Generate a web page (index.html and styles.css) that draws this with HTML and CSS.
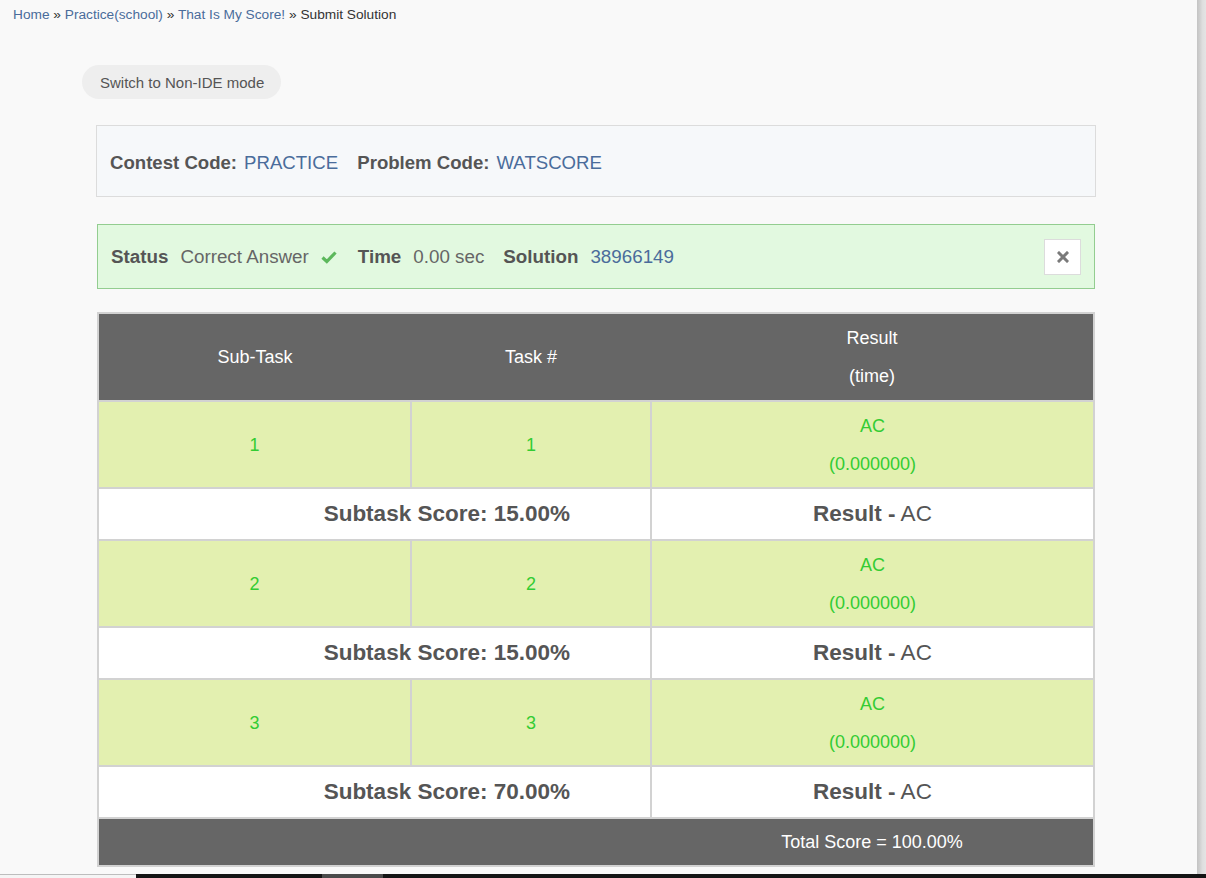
FILE: index.html
```html
<!DOCTYPE html>
<html>
<head>
<meta charset="utf-8">
<link rel="stylesheet" href="styles.css">
</head>
<body>
<div class="screen">
  <div class="page">
    <div class="breadcrumb">
      <a href="#">Home</a> <span class="sep">»</span> <a href="#">Practice(school)</a> <span class="sep">»</span> <a href="#">That Is My Score!</a> <span class="sep">»</span> <span class="current">Submit Solution</span>
    </div>
    <div class="toolbar">
      <button class="mode-btn">Switch to Non-IDE mode</button>
    </div>
    <div class="content">
      <div class="codes">
        <span class="label">Contest Code:</span><a class="value link" href="#">PRACTICE</a>
        <span class="label second">Problem Code:</span><a class="value link" href="#">WATSCORE</a>
      </div>
      <div class="status">
        <div class="status-items">
          <span class="label">Status</span><span class="value">Correct Answer</span>
          <svg class="check" width="16" height="14" viewBox="0 0 16 14"><path d="M1.5 7.5 L5.8 11.5 L14.5 2.5" fill="none" stroke="#5cb85c" stroke-width="3.2" stroke-linejoin="miter"/></svg>
          <span class="label">Time</span><span class="value">0.00 sec</span>
          <span class="label">Solution</span><a class="value link" href="#">38966149</a>
        </div>
        <button class="close"><svg width="12" height="12" viewBox="0 0 12 12"><path d="M2 2 L10 10 M10 2 L2 10" stroke="#7a7a7a" stroke-width="3" stroke-linecap="square"/></svg></button>
      </div>
      <table class="results">
        <colgroup><col class="c1"><col class="c2"><col class="c3"></colgroup>
        <thead>
          <tr><th class="h1">Sub-Task</th><th class="h2">Task #</th><th class="h3">Result<br>(time)</th></tr>
        </thead>
        <tbody>
          <tr class="task"><td>1</td><td>1</td><td>AC<br>(0.000000)</td></tr>
          <tr class="sub"><td colspan="2" class="score">Subtask Score: 15.00%</td><td class="res"><b>Result -</b> AC</td></tr>
          <tr class="task"><td>2</td><td>2</td><td>AC<br>(0.000000)</td></tr>
          <tr class="sub"><td colspan="2" class="score">Subtask Score: 15.00%</td><td class="res"><b>Result -</b> AC</td></tr>
          <tr class="task"><td>3</td><td>3</td><td>AC<br>(0.000000)</td></tr>
          <tr class="sub"><td colspan="2" class="score">Subtask Score: 70.00%</td><td class="res"><b>Result -</b> AC</td></tr>
          <tr class="total"><td colspan="2" class="blank"></td><td class="sum">Total Score = 100.00%</td></tr>
        </tbody>
      </table>
    </div>
  </div>
  <div class="edge"></div>
</div>
<div class="taskbar">
  <div class="tb-left"></div>
  <div class="tb-dark"></div>
  <div class="tb-tab"></div>
  <div class="tb-rest"></div>
</div>
</body>
</html>
```

FILE: styles.css
```css
html, body {
  margin: 0;
  padding: 0;
  height: 878px;
  overflow: hidden;
}
body {
  font-family: "Liberation Sans", Arial, sans-serif;
  background: #f9f9f9;
  display: flex;
  flex-direction: column;
  color: #555;
}
.screen {
  flex: 1;
  display: flex;
  min-height: 0;
}
.page {
  flex: 1;
  background: #f9f9f9;
}
.edge {
  width: 9px;
  background: linear-gradient(to right, #c4c4c4 0, #cfcfcf 30%, #dedede 60%, #e4e4e4 100%);
}
.breadcrumb {
  padding: 6px 13px 0;
  font-size: 13.7px;
  line-height: 17px;
  color: #333;
}
.breadcrumb a {
  color: #4a6c9b;
  text-decoration: none;
}
.breadcrumb .sep {
  color: #333;
}
.toolbar {
  padding: 42px 0 0 82px;
}
.mode-btn {
  font-family: "Liberation Sans", Arial, sans-serif;
  font-size: 15px;
  color: #555;
  background: #eeeeee;
  border: none;
  border-radius: 17px;
  height: 34px;
  padding: 0 17px 0 18px;
}
.content {
  margin: 26px 0 0 96px;
  width: 1000px;
}
.link {
  color: #4a6c9b;
  text-decoration: none;
}
.label {
  font-weight: bold;
  color: #555;
}
.codes {
  background: #f6f8fa;
  border: 1px solid #dcdcdc;
  padding: 26px 13px 22px;
  font-size: 18.6px;
  line-height: 22px;
}
.codes .value {
  margin-left: 7px;
}
.codes .second {
  margin-left: 14px;
}
.status {
  margin: 27px 1px 0 1px;
  height: 65px;
  box-sizing: border-box;
  background: #e2f9e0;
  border: 1px solid #93cd90;
  display: flex;
  align-items: center;
  justify-content: space-between;
  padding: 0 13px 0 13px;
  font-size: 18.8px;
}
.status-items {
  display: flex;
  align-items: center;
}
.status-items .value {
  margin-left: 12px;
  margin-right: 19px;
  color: #666;
}
.status-items .link {
  color: #4a6c9b;
}
.status-items .check {
  margin: 0 21px 0 -7px;
}
.close {
  width: 37px;
  height: 36px;
  background: #fff;
  border: 1px solid #dcdcdc;
  padding: 0;
  display: flex;
  align-items: center;
  justify-content: center;
}
.results {
  margin: 23px 0 0 1px;
  width: 998px;
  border-collapse: collapse;
  table-layout: fixed;
  font-size: 18px;
  text-align: center;
}
.results .c1 { width: 313px; }
.results .c2 { width: 240px; }
.results th, .results td {
  border: 2px solid #d2d2d2;
  padding: 0;
}
.results th {
  background: #666;
  color: #fff;
  font-weight: normal;
  line-height: 38px;
  height: 86px;
}
.results th.h1 { border-right: none; }
.results th.h2 { border-left: none; border-right: none; }
.results th.h3 { border-left: none; }
.task td {
  background: #e3f0b0;
  color: #33cc33;
  line-height: 38px;
  height: 85px;
}
.sub td {
  background: #fff;
  height: 50px;
  font-size: 22.5px;
  color: #555;
}
.sub .score {
  font-weight: bold;
  text-align: right;
  padding-right: 80px;
}
.sub .res b {
  font-weight: bold;
}
.total td {
  background: #666;
  color: #fff;
  height: 46px;
}
.total .blank { border-right: none; }
.total .sum { border-left: none; }
.taskbar {
  height: 4px;
  display: flex;
}
.tb-left {
  width: 136px;
  background: #f5f5f5;
  border-top: 1px solid #bdbdbd;
  box-sizing: border-box;
}
.tb-dark {
  width: 186px;
  background: #141414;
}
.tb-tab {
  width: 61px;
  background: #4a4a4a;
}
.tb-rest {
  flex: 1;
  background: #141414;
}
```
